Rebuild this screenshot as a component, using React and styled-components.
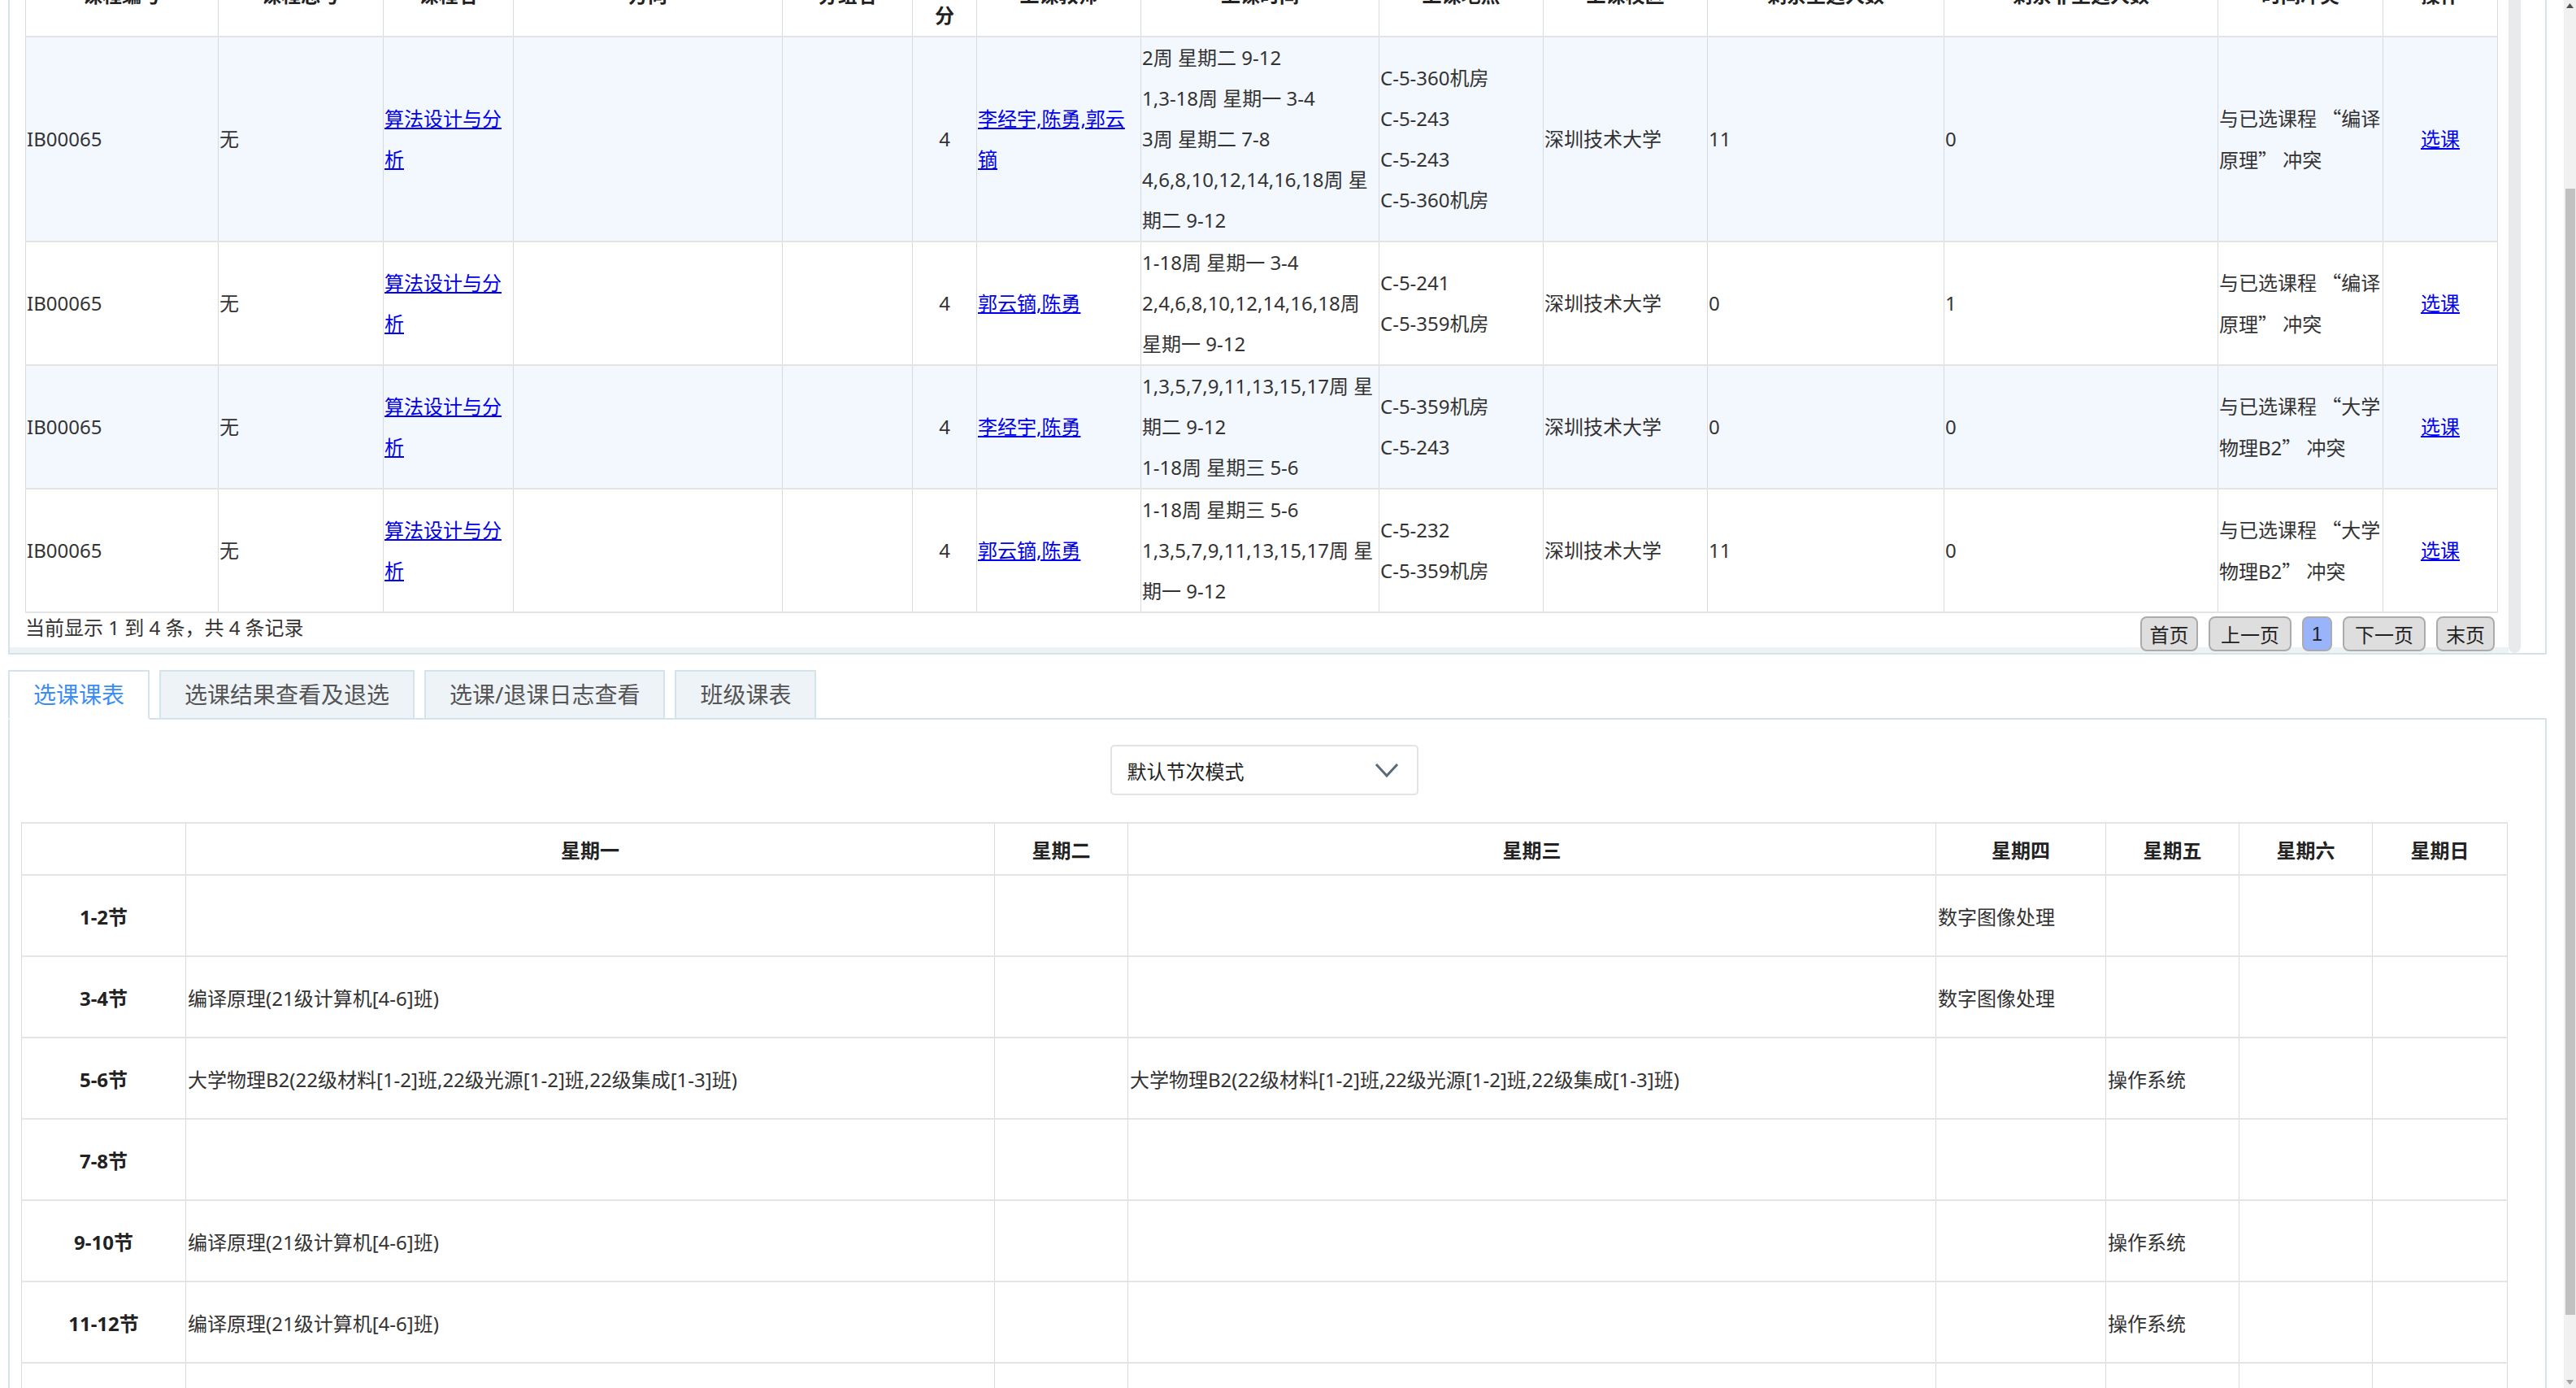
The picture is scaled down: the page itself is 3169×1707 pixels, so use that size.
import React from "react";
import styled, { createGlobalStyle } from "styled-components";

const GlobalStyle = createGlobalStyle`
  html, body {
    margin: 0;
    padding: 0;
    overflow: hidden;
    background: #fff;
  }
  body {
    font-family: "Noto Sans", "Noto Sans CJK SC", sans-serif;
    font-size: 24px;
    color: #333;
  }
`

const Page = styled.div`
  width: 3123px;
  margin: -58px 0 0 10px;
`

// ---------- top panel : course list ----------
const TopPanel = styled.div`
  display: flex;
  border: 2px solid #d3e4ec;
  border-top: none;
  padding-right: 30px;
`

const ScrollArea = styled.div`
  width: 3074px;
`

const TableWrap = styled.div`
  padding-left: 19px;
`

const VTrack = styled.div`
  width: 15px;
  background: #e9eaec;
  border-radius: 0 0 8px 8px;
`

const CourseTable = styled.table`
  width: 3042px;
  table-layout: fixed;
  border-collapse: collapse;
  border-top: 2px solid #e4e4e4;
  border-left: 1px solid #d5dbe0;
  border-right: 1px solid #d5dbe0;
`

const HeadCell = styled.th`
  padding: 0;
  line-height: 50px;
  font-weight: bold;
  color: #222;
  text-align: center;
  white-space: nowrap;
  background: #fff;
  border-left: 1px solid #d5dbe0;
  border-bottom: 2px solid #e4e4e4;
`

const Row = styled.tr`
  background: ${p => (p.$alt ? "#f3f8fe" : "#fff")};
`

const Cell = styled.td`
  padding: 0 1px;
  line-height: 50px;
  vertical-align: middle;
  text-align: ${p => (p.$center ? "center" : "left")};
  white-space: nowrap;
  overflow: hidden;
  border-left: 1px solid #d5dbe0;
  border-bottom: 2px solid #e4e4e4;
`

const Line = styled.div``

// full-width CJK quotation marks, as the original font draws them
const Quote = styled.span`
  font-family: "Noto Sans CJK SC", sans-serif;
  font-feature-settings: "fwid" 1;
`

const Link = styled.a`
  color: #0000ee;
  text-decoration: underline;
  cursor: pointer;
`

const Pager = styled.div`
  display: flex;
  justify-content: space-between;
  align-items: flex-start;
  height: 49px;
  padding: 0 17px 0 19px;
  background: linear-gradient(#fff 42px, #eef2f5 42px);
`

const PagerInfo = styled.div`
  line-height: 36px;
  color: #333;
`

const PagerButtons = styled.div`
  display: flex;
  gap: 13px;
  margin-top: 4px;
`

const PageButton = styled.button`
  box-sizing: border-box;
  width: ${p => p.$w}px;
  height: 43px;
  padding: 0;
  border: 2px solid #ababab;
  border-radius: 8px;
  background: ${p => (p.$active ? "#9ab4fb" : "#dedede")};
  font: 24px "Liberation Sans", "Noto Sans CJK SC", sans-serif;
  color: #222;
`

// ---------- tabs ----------
const TabBar = styled.div`
  display: flex;
  gap: 12px;
  margin-top: 19px;
  border-bottom: 2px solid #d3e4ec;
`

const Tab = styled.div`
  height: 57px;
  padding: 0 29px;
  line-height: 57px;
  font-size: 28px;
  margin-bottom: -2px;
  border: 2px solid #d3e4ec;
  border-bottom-color: ${p => (p.$active ? "#fff" : "#d3e4ec")};
  background: ${p => (p.$active ? "#fff" : "#eef3f8")};
  color: ${p => (p.$active ? "#3b8ef0" : "#555")};
`

// ---------- schedule board ----------
const Board = styled.div`
  border: 2px solid #d3e4ec;
  border-top: none;
  padding: 31px 47px 0 14px;
`

const SelectRow = styled.div`
  display: flex;
  justify-content: center;
`

const SelectBox = styled.div`
  box-sizing: border-box;
  width: 379px;
  height: 62px;
  display: flex;
  align-items: center;
  justify-content: space-between;
  padding: 0 22px 0 19px;
  border: 2px solid #e3e3e3;
  border-radius: 5px;
  color: #222;
`

const Schedule = styled.table`
  width: 3058px;
  margin-top: 33px;
  table-layout: fixed;
  border-collapse: collapse;
  border-top: 2px solid #e4e4e4;
  border-left: 1px solid #d5dbe0;
  border-right: 1px solid #d5dbe0;
`

const SHead = styled.th`
  height: 62px;
  padding: 0;
  font-weight: bold;
  color: #222;
  text-align: center;
  border-left: 1px solid #d5dbe0;
  border-bottom: 2px solid #e4e4e4;
`

const SCell = styled.td`
  height: 98px;
  padding: 0 2px;
  white-space: nowrap;
  overflow: hidden;
  vertical-align: middle;
  font-weight: ${p => (p.$label ? "bold" : "normal")};
  text-align: ${p => (p.$label ? "center" : "left")};
  color: ${p => (p.$label ? "#222" : "#333")};
  border-left: 1px solid #d5dbe0;
  border-bottom: 2px solid #e4e4e4;
`

// ---------- page scrollbar ----------
const ScrollBar = styled.div`
  position: fixed;
  top: 0;
  right: 0;
  width: 15px;
  height: 100vh;
  background: #f1f1f1;
`

const Thumb = styled.div`
  position: absolute;
  left: 2px;
  right: 1px;
  top: 232px;
  height: 1385px;
  background: #c1c1c1;
`

const Arrow = styled.svg`
  position: absolute;
  left: 3px;
  ${p => (p.$down ? "bottom: 4px;" : "top: 4px;")}
`

const headers = [
  ["课程编号"], ["课程总号"], ["课程名"], ["方向"], ["分组名"], ["学", "分"],
  ["上课教师"], ["上课时间"], ["上课地点"], ["上课校区"], ["剩余主选人数"],
  ["剩余非主选人数"], ["时间冲突"], ["操作"],
];
const colWidths = [237, 203, 160, 331, 160, 79, 202, 293, 202, 202, 291, 337, 203, 141];

const bianyiConflict = [
  <>与已选课程 <Quote>“</Quote>编译</>,
  <>原理<Quote>”</Quote> 冲突</>,
];
const wuliConflict = [
  <>与已选课程 <Quote>“</Quote>大学</>,
  <>物理B2<Quote>”</Quote> 冲突</>,
];

const courses = [
  {
    teacher: ["李经宇,陈勇,郭云", "镝"],
    time: ["2周 星期二 9-12", "1,3-18周 星期一 3-4", "3周 星期二 7-8", "4,6,8,10,12,14,16,18周 星", "期二 9-12"],
    place: ["C-5-360机房", "C-5-243", "C-5-243", "C-5-360机房"],
    main: "11", other: "0",
    conflict: bianyiConflict,
  },
  {
    teacher: ["郭云镝,陈勇"],
    time: ["1-18周 星期一 3-4", "2,4,6,8,10,12,14,16,18周", "星期一 9-12"],
    place: ["C-5-241", "C-5-359机房"],
    main: "0", other: "1",
    conflict: bianyiConflict,
  },
  {
    teacher: ["李经宇,陈勇"],
    time: ["1,3,5,7,9,11,13,15,17周 星", "期二 9-12", "1-18周 星期三 5-6"],
    place: ["C-5-359机房", "C-5-243"],
    main: "0", other: "0",
    conflict: wuliConflict,
  },
  {
    teacher: ["郭云镝,陈勇"],
    time: ["1-18周 星期三 5-6", "1,3,5,7,9,11,13,15,17周 星", "期一 9-12"],
    place: ["C-5-232", "C-5-359机房"],
    main: "11", other: "0",
    conflict: wuliConflict,
  },
];

const days = ["星期一", "星期二", "星期三", "星期四", "星期五", "星期六", "星期日"];
const dayWidths = [202, 995, 164, 994, 209, 164, 164, 166];
const bianyi = "编译原理(21级计算机[4-6]班)";
const wuli = "大学物理B2(22级材料[1-2]班,22级光源[1-2]班,22级集成[1-3]班)";
const periods = [
  ["1-2节", ["", "", "", "数字图像处理", "", "", ""]],
  ["3-4节", [bianyi, "", "", "数字图像处理", "", "", ""]],
  ["5-6节", [wuli, "", wuli, "", "操作系统", "", ""]],
  ["7-8节", ["", "", "", "", "", "", ""]],
  ["9-10节", [bianyi, "", "", "", "操作系统", "", ""]],
  ["11-12节", [bianyi, "", "", "", "操作系统", "", ""]],
  ["13-14节", ["", "", "", "", "", "", ""]],
];

const pages = [
  { label: "首页", w: 71 },
  { label: "上一页", w: 102 },
  { label: "1", w: 37, active: true },
  { label: "下一页", w: 102 },
  { label: "末页", w: 72 },
];

const tabs = ["选课课表", "选课结果查看及退选", "选课/退课日志查看", "班级课表"];

function Lines({ items }) {
  return items.map((t, i) => <Line key={i}>{t}</Line>);
}

function App() {
  return (
    <>
      <GlobalStyle />
      <Page>
        <TopPanel>
          <ScrollArea>
            <TableWrap>
              <CourseTable>
                <colgroup>
                  {colWidths.map((w, i) => <col key={i} style={{ width: w }} />)}
                </colgroup>
                <thead>
                  <tr>
                    {headers.map((h, i) => (
                      <HeadCell key={i}><Lines items={h} /></HeadCell>
                    ))}
                  </tr>
                </thead>
                <tbody>
                  {courses.map((c, i) => (
                    <Row key={i} $alt={i % 2 === 0}>
                      <Cell>IB00065</Cell>
                      <Cell>无</Cell>
                      <Cell>
                        <Link><Lines items={["算法设计与分", "析"]} /></Link>
                      </Cell>
                      <Cell />
                      <Cell />
                      <Cell $center>4</Cell>
                      <Cell>
                        <Link><Lines items={c.teacher} /></Link>
                      </Cell>
                      <Cell><Lines items={c.time} /></Cell>
                      <Cell><Lines items={c.place} /></Cell>
                      <Cell>深圳技术大学</Cell>
                      <Cell>{c.main}</Cell>
                      <Cell>{c.other}</Cell>
                      <Cell><Lines items={c.conflict} /></Cell>
                      <Cell $center><Link>选课</Link></Cell>
                    </Row>
                  ))}
                </tbody>
              </CourseTable>
            </TableWrap>
            <Pager>
              <PagerInfo>当前显示 1 到 4 条，共 4 条记录</PagerInfo>
              <PagerButtons>
                {pages.map(p => (
                  <PageButton key={p.label} $w={p.w} $active={p.active}>{p.label}</PageButton>
                ))}
              </PagerButtons>
            </Pager>
          </ScrollArea>
          <VTrack />
        </TopPanel>

        <TabBar>
          {tabs.map((t, i) => (
            <Tab key={t} $active={i === 0}>{t}</Tab>
          ))}
        </TabBar>

        <Board>
          <SelectRow>
            <SelectBox>
              <span>默认节次模式</span>
              <svg width="30" height="19" viewBox="0 0 30 19">
                <polyline points="2,2 15,16 28,2" fill="none" stroke="#5b6b77" strokeWidth="3" />
              </svg>
            </SelectBox>
          </SelectRow>
          <Schedule>
            <colgroup>
              {dayWidths.map((w, i) => <col key={i} style={{ width: w }} />)}
            </colgroup>
            <thead>
              <tr>
                <SHead />
                {days.map(d => <SHead key={d}>{d}</SHead>)}
              </tr>
            </thead>
            <tbody>
              {periods.map(([label, cells]) => (
                <tr key={label}>
                  <SCell $label>{label}</SCell>
                  {cells.map((t, i) => <SCell key={i}>{t}</SCell>)}
                </tr>
              ))}
            </tbody>
          </Schedule>
        </Board>
      </Page>

      <ScrollBar>
        <Arrow width="9" height="6" viewBox="0 0 9 6">
          <polygon points="4.5,0 9,6 0,6" fill="#505050" />
        </Arrow>
        <Thumb />
        <Arrow $down width="9" height="6" viewBox="0 0 9 6">
          <polygon points="0,0 9,0 4.5,6" fill="#a3a3a3" />
        </Arrow>
      </ScrollBar>
    </>
  );
}

export default App;
